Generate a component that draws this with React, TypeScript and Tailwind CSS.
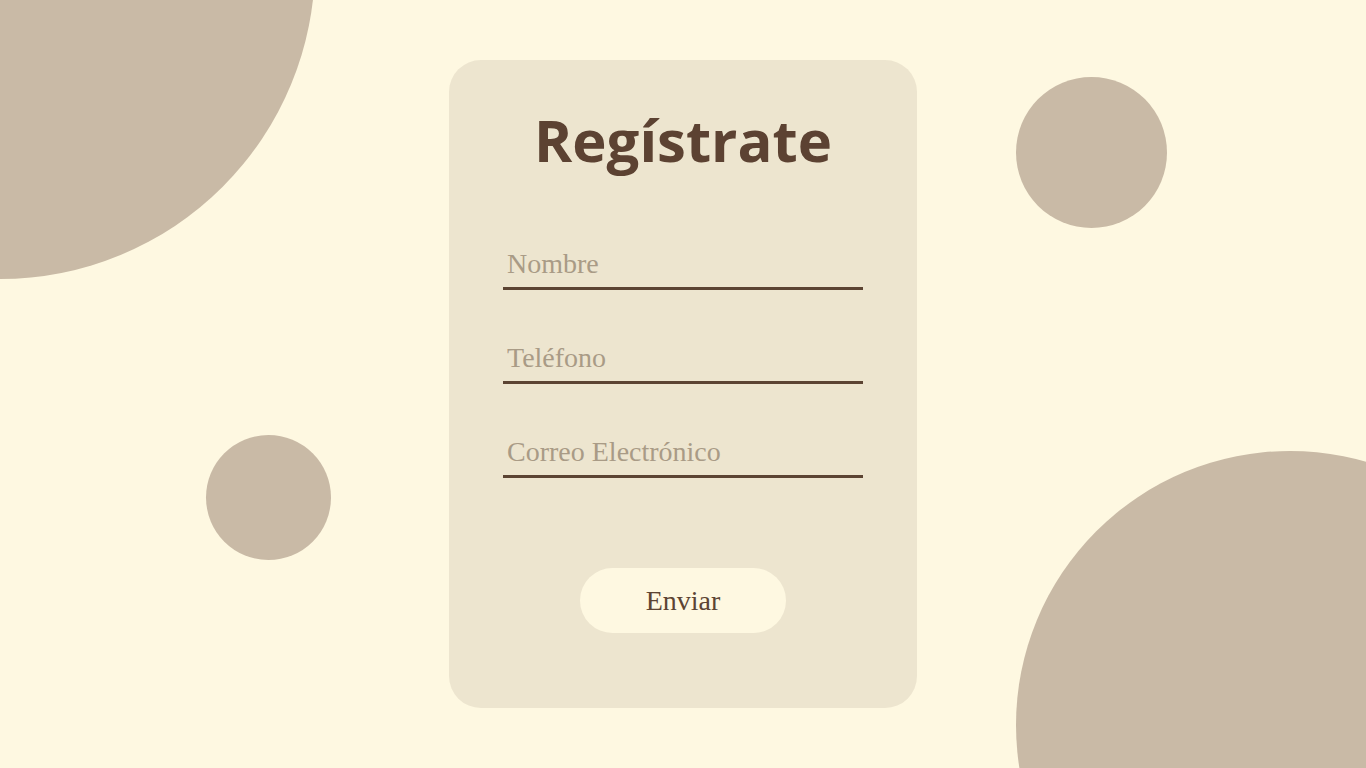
import React from "react";

export default function App() {
  const fields = ["Nombre", "Teléfono", "Correo Electrónico"];
  return (
    <div className="relative w-full h-[768px] overflow-hidden bg-[#fef8e1]">
      <div className="absolute left-[-315px] top-[-351px] w-[630px] h-[630px] rounded-full bg-[#c9baa6]" />
      <div className="absolute left-[1016px] top-[77px] w-[151px] h-[151px] rounded-full bg-[#c9baa6]" />
      <div className="absolute left-[206px] top-[435px] w-[125px] h-[125px] rounded-full bg-[#c9baa6]" />
      <div className="absolute left-[1016px] top-[451px] w-[548px] h-[548px] rounded-full bg-[#c9baa6]" />

      <div className="relative pt-[60px] flex justify-center">
        <div className="w-[468px] h-[648px] rounded-[32px] bg-[#ede5cf] flex flex-col items-center pt-[51px]">
          <h1
            className="text-[58px] leading-none font-bold text-[#5c4232]"
            style={{ fontFamily: '"Open Sans", sans-serif' }}
          >
            Regístrate
          </h1>
          <div className="mt-[73px] flex flex-col gap-[46px]">
            {fields.map((f) => (
              <input
                key={f}
                placeholder={f}
                className="w-[360px] h-[48px] pl-[4px] pb-[2px] bg-transparent border-b-[3px] border-[#5c4433] text-[28px] text-[#5c4433] placeholder:text-[#a99b86] outline-none"
                style={{ fontFamily: '"Liberation Serif", serif' }}
              />
            ))}
          </div>
          <button
            className="mt-[90px] w-[206px] h-[65px] rounded-full bg-[#fef8e1] text-[28px] text-[#5c4433]"
            style={{ fontFamily: '"Liberation Serif", serif' }}
          >
            Enviar
          </button>
        </div>
      </div>
    </div>
  );
}
